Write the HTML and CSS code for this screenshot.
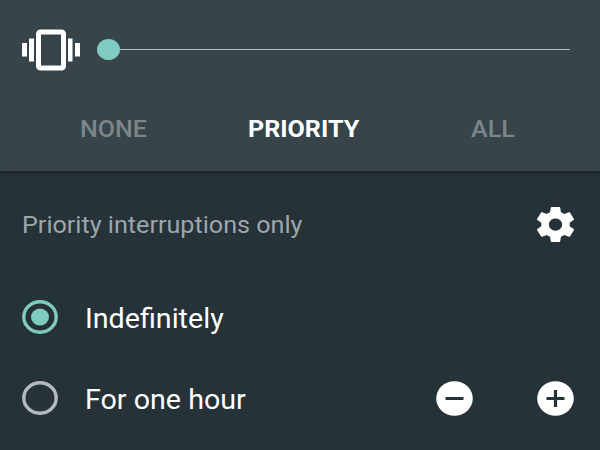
FILE: index.html
```html
<!DOCTYPE html>
<html lang="en">
<head>
<meta charset="utf-8">
<title>Interruptions</title>
<link rel="stylesheet" href="styles.css">
</head>
<body>
<main class="panel">
  <header class="top">
    <div class="volume">
      <svg class="vibrate" width="58" height="42" viewBox="0 0 58 42" fill="#fff">
        <rect x="0" y="14" width="5" height="13.5"/>
        <rect x="7" y="9.5" width="5" height="23"/>
        <rect x="16.5" y="3" width="25" height="36" rx="2" fill="none" stroke="#fff" stroke-width="5"/>
        <rect x="46" y="9.5" width="4.5" height="23"/>
        <rect x="53" y="14" width="5" height="13.5"/>
      </svg>
      <div class="slider"><span class="thumb"></span><span class="track"></span></div>
    </div>
    <nav class="tabs">
      <span class="tab none">NONE</span>
      <span class="tab priority">PRIORITY</span>
      <span class="tab all">ALL</span>
    </nav>
  </header>
  <section class="body">
    <div class="row summary">
      <span class="caption">Priority interruptions only</span>
      <svg class="gear" width="37" height="35" viewBox="2.27 2 19.46 20" preserveAspectRatio="none" fill="#fff"><path d="M19.43 12.98c.04-.32.07-.64.07-.98s-.03-.66-.07-.98l2.11-1.65c.19-.15.24-.42.12-.64l-2-3.46c-.12-.22-.39-.3-.61-.22l-2.49 1c-.52-.4-1.08-.73-1.69-.98l-.38-2.65C14.46 2.18 14.25 2 14 2h-4c-.25 0-.46.18-.49.42l-.38 2.65c-.61.25-1.17.59-1.69.98l-2.49-1c-.23-.09-.49 0-.61.22l-2 3.46c-.13.22-.07.49.12.64l2.11 1.65c-.04.32-.07.65-.07.98s.03.66.07.98l-2.11 1.65c-.19.15-.24.42-.12.64l2 3.46c.12.22.39.3.61.22l2.49-1c.52.4 1.08.73 1.69.98l.38 2.65c.03.24.24.42.49.42h4c.25 0 .46-.18.49-.42l.38-2.65c.61-.25 1.17-.59 1.69-.98l2.49 1c.23.09.49 0 .61-.22l2-3.46c.12-.22.07-.49-.12-.64l-2.11-1.65zM12 15.5c-1.93 0-3.5-1.57-3.5-3.5s1.57-3.5 3.5-3.5 3.5 1.57 3.5 3.5-1.57 3.5-3.5 3.5z"/></svg>
    </div>
    <div class="row forever">
      <svg class="radio on" width="36" height="34" viewBox="0 0 36 34"><ellipse class="ring" cx="18" cy="17" rx="16.2" ry="15.2"/><ellipse class="dot" cx="18" cy="17" rx="9" ry="8.6"/></svg>
      <span class="label indefinitely">Indefinitely</span>
    </div>
    <div class="row timed">
      <svg class="radio" width="36" height="34" viewBox="0 0 36 34"><ellipse class="ring" cx="18" cy="17" rx="16.2" ry="15.2"/></svg>
      <span class="label hour">For one hour</span>
      <svg class="step minus" width="37" height="35" viewBox="0 0 37 35"><ellipse cx="18.5" cy="17.5" rx="18.3" ry="17.3" fill="#fff"/><path d="M9.5 17.5h18" stroke="#263238" stroke-width="3"/></svg>
      <svg class="step" width="37" height="35" viewBox="0 0 37 35"><ellipse cx="18.5" cy="17.5" rx="18.3" ry="17.3" fill="#fff"/><path d="M9.5 17.5h18M18.5 9v17" stroke="#263238" stroke-width="3.2"/></svg>
    </div>
  </section>
</main>
</body>
</html>
```
FILE: styles.css
```css
* { box-sizing: border-box; }
body { margin: 0; background: #253237; font-family: Roboto, sans-serif; color: #fff; }
.panel { width: 600px; height: 450px; display: flex; flex-direction: column; overflow: hidden; background: #253237; }
.top { height: 171px; background: #374449; box-shadow: 0 1px 5px rgba(0, 0, 0, .5); z-index: 1; }
.volume { display: flex; align-items: center; height: 99px; padding: 0 30px 0 22px; }
.vibrate { display: block; }
.slider { flex: 1; display: flex; align-items: center; margin-left: 17px; }
.thumb { width: 23px; height: 21px; border-radius: 50%; background: #80cbc0; }
.track { flex: 1; height: 1px; background: #b3bbbf; }
.tabs { display: flex; height: 60px; line-height: 60px; font-size: 24px; font-weight: 500; color: #7b868b; padding-left: 80px; }
.tab, .caption, .label { transform-origin: 0 50%; white-space: nowrap; }
.tab { transform: scaleX(1.045); }
.none { width: 168px; }
.priority { width: 223px; font-weight: 700; color: #fff; }
.row { display: flex; align-items: center; padding: 0 26px 0 22px; }
.summary { height: 106px; justify-content: space-between; }
.caption { padding-top: 2px; font-size: 24px; color: #9ea6ab; transform: scaleX(1.048); }
.forever { height: 80px; }
.timed { height: 82px; }
.radio { flex: none; }
.ring { fill: none; stroke: #b4b9c5; stroke-width: 3.4; }
.on .ring { stroke: #80cbc0; }
.dot { fill: #80cbc0; }
.label { padding-top: 2px; margin-left: 27px; font-size: 28px; transform: scaleX(1.023); }
.hour { width: 351px; }
.minus { margin-right: 64px; }
.step { flex: none; }
```
